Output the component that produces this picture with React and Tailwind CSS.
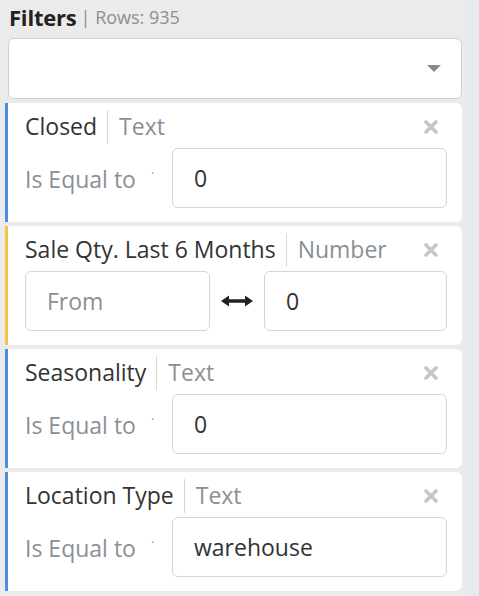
const filters = [
  { name: 'Closed', type: 'Text', color: 'border-[#4a90e2]', op: 'Is Equal to', value: '0' },
  { name: 'Sale Qty. Last 6 Months', type: 'Number', color: 'border-[#f6c342]', range: true, value: '0' },
  { name: 'Seasonality', type: 'Text', color: 'border-[#4a90e2]', op: 'Is Equal to', value: '0' },
  { name: 'Location Type', type: 'Text', color: 'border-[#4a90e2]', op: 'Is Equal to', value: 'warehouse' },
]

function Field({ children, className = '', muted }) {
  return (
    <div className={`h-[60px] rounded-md border border-[#d3d6da] bg-white flex items-center px-[21px] ${muted ? 'text-[#8a8f95]' : 'text-[#333]'} ${className}`}>
      {children}
    </div>
  )
}

function CloseIcon() {
  return (
    <svg width="14" height="14" viewBox="0 0 14 14" className="ml-auto mr-[9px] shrink-0">
      <path d="M2 2L12 12M12 2L2 12" stroke="#c6c6c6" strokeWidth="3.6" strokeLinecap="round" />
    </svg>
  )
}

function FilterCard({ f }) {
  return (
    <div className={`bg-white border-l-[3px] ${f.color} rounded-r-md h-[119px] pl-[17px] pr-[15px] flex flex-col`}>
      <div className="flex items-center h-[45px] pt-[2px] whitespace-nowrap">
        <span className="text-[#333]">{f.name}</span>
        <span className="w-px h-[34px] bg-[#d8d8d8] ml-[10px] mr-[11px]" />
        <span className="text-[#8a8f95]">{f.type}</span>
        <CloseIcon />
      </div>
      {f.range ? (
        <div className="flex items-center">
          <Field className="w-[185px]" muted>From</Field>
          <svg width="32" height="12" viewBox="0 0 32 12" className="mx-[11px]">
            <path d="M5 6H27" stroke="#222" strokeWidth="3.5" />
            <path d="M0 6L8 0.5V11.5Z M32 6L24 0.5V11.5Z" fill="#222" />
          </svg>
          <Field className="flex-1">{f.value}</Field>
        </div>
      ) : (
        <div className="flex items-center">
          <span className="text-[#8a8f95] w-[126px] mt-[3px] whitespace-nowrap">{f.op}</span>
          <span className="text-[#8a8f95] text-xs -mt-2 w-[21px]">·</span>
          <Field className="flex-1">{f.value}</Field>
        </div>
      )}
    </div>
  )
}

export default function App() {
  return (
    <div className="min-h-screen bg-[#ebebeb] flex" style={{ fontFamily: '"Open Sans", "Noto Sans", sans-serif' }}>
      <div className="w-[466px] pl-[5px] pr-[4px]">
        <div className="h-[38px] flex items-center pl-[4px] pb-[4px] whitespace-nowrap">
          <span className="font-bold text-[22px] text-[#222] tracking-[-0.2px]">Filters</span>
          <span className="text-[18px] text-[#8a8f95] ml-[4px]">| Rows: 935</span>
        </div>
        <div className="ml-[3px] h-[61px] bg-white border border-[#cfcfcf] rounded-md flex items-center justify-end pr-[20px]">
          <span className="w-0 h-0 border-l-[7px] border-r-[7px] border-t-[7px] border-l-transparent border-r-transparent border-t-[#8a8a8a]" />
        </div>
        <div className="flex flex-col gap-[4px] mt-[4px] text-[23px]">
          {filters.map((f) => (
            <FilterCard key={f.name} f={f} />
          ))}
        </div>
      </div>
      <div className="flex-1 bg-[#e7e9ec]" />
    </div>
  )
}
